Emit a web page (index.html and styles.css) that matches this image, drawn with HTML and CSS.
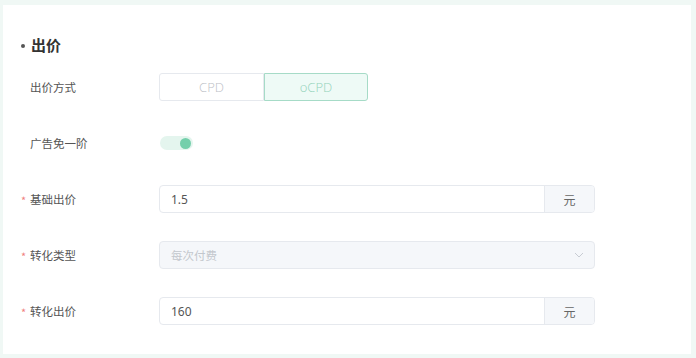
FILE: index.html
```html
<!DOCTYPE html>
<html lang="zh">
<head>
<meta charset="utf-8">
<link rel="stylesheet" href="styles.css">
</head>
<body>
<div class="card">
  <div class="title"><span class="dot"></span>出价</div>
  <div class="form">
    <div class="row">
      <div class="label">出价方式</div>
      <div class="seg">
        <div class="seg-item">CPD</div>
        <div class="seg-item active">oCPD</div>
      </div>
    </div>
    <div class="row">
      <div class="label">广告免一阶</div>
      <div class="switch"><span class="knob"></span></div>
    </div>
    <div class="row">
      <div class="label"><span class="req">*</span>基础出价</div>
      <div class="input">
        <div class="input-value">1.5</div>
        <div class="addon">元</div>
      </div>
    </div>
    <div class="row">
      <div class="label"><span class="req">*</span>转化类型</div>
      <div class="input select">
        <div class="input-value placeholder">每次付费</div>
        <svg class="chev" width="10" height="6" viewBox="0 0 10 6"><path d="M1 1 L5 5 L9 1" fill="none" stroke="#c8ccd3" stroke-width="1"/></svg>
      </div>
    </div>
    <div class="row">
      <div class="label"><span class="req">*</span>转化出价</div>
      <div class="input">
        <div class="input-value">160</div>
        <div class="addon">元</div>
      </div>
    </div>
  </div>
</div>
</body>
</html>
```

FILE: styles.css
```css
html, body {
  margin: 0;
  padding: 0;
}
body {
  background: #f0f8f5;
  width: 696px;
  height: 358px;
  overflow: hidden;
  font-family: "Noto Sans CJK SC", "Noto Sans", sans-serif;
  color: #555;
}
.card {
  background: #fff;
  margin: 5px 5px 0 3px;
  height: 349px;
  box-sizing: border-box;
  padding: 29px 0 0 16px;
}
.title {
  height: 22px;
  line-height: 22px;
  font-size: 15px;
  font-weight: bold;
  color: #333;
  display: flex;
  align-items: center;
}
.dot {
  width: 4px;
  height: 4px;
  border-radius: 50%;
  background: #555;
  margin: 2px 6px 0 2px;
}
.form {
  margin-top: 17px;
  display: flex;
  flex-direction: column;
  gap: 28px;
}
.row {
  display: flex;
  align-items: center;
  height: 28px;
}
.label {
  width: 140px;
  box-sizing: border-box;
  padding-left: 11px;
  font-size: 11.5px;
  color: #555;
  position: relative;
}
.req {
  position: absolute;
  left: 2px;
  top: 1px;
  color: #f07f7f;
  font-size: 11px;
}
.seg {
  display: flex;
  height: 28px;
}
.seg-item {
  box-sizing: border-box;
  width: 105px;
  height: 28px;
  line-height: 26px;
  text-align: center;
  font-size: 13px;
  color: #bcc0c6;
  border: 1px solid #e6e9ee;
  border-radius: 3px 0 0 3px;
  font-family: "Open Sans", "Noto Sans", sans-serif;
  font-weight: 300;
}
.seg-item.active {
  width: 104px;
  border-color: #a6dbc7;
  background: #eefaf6;
  color: #94d3bb;
  border-radius: 0 3px 3px 0;
}
.switch {
  margin-left: 1px;
  width: 33px;
  height: 14px;
  border-radius: 7px;
  background: #e4f5ee;
  position: relative;
}
.knob {
  position: absolute;
  right: 2px;
  top: 1.5px;
  width: 11px;
  height: 11px;
  border-radius: 50%;
  background: #74cfab;
}
.input {
  box-sizing: border-box;
  width: 436px;
  height: 28px;
  border: 1px solid #e6e9ee;
  border-radius: 4px;
  display: flex;
  align-items: center;
  overflow: hidden;
}
.input-value {
  flex: 1;
  padding-left: 11px;
  font-size: 12px;
  color: #555;
  font-family: "Noto Sans", "Noto Sans CJK SC", sans-serif;
}
.input-value.placeholder {
  color: #c3c7cd;
  font-family: "Noto Sans CJK SC", sans-serif;
  font-size: 11.5px;
}
.addon {
  width: 49px;
  height: 100%;
  background: #f5f7fa;
  border-left: 1px solid #e6e9ee;
  display: flex;
  align-items: center;
  justify-content: center;
  font-size: 12px;
  color: #666;
}
.select {
  background: #f5f7fa;
}
.chev {
  margin-right: 10px;
}
```
